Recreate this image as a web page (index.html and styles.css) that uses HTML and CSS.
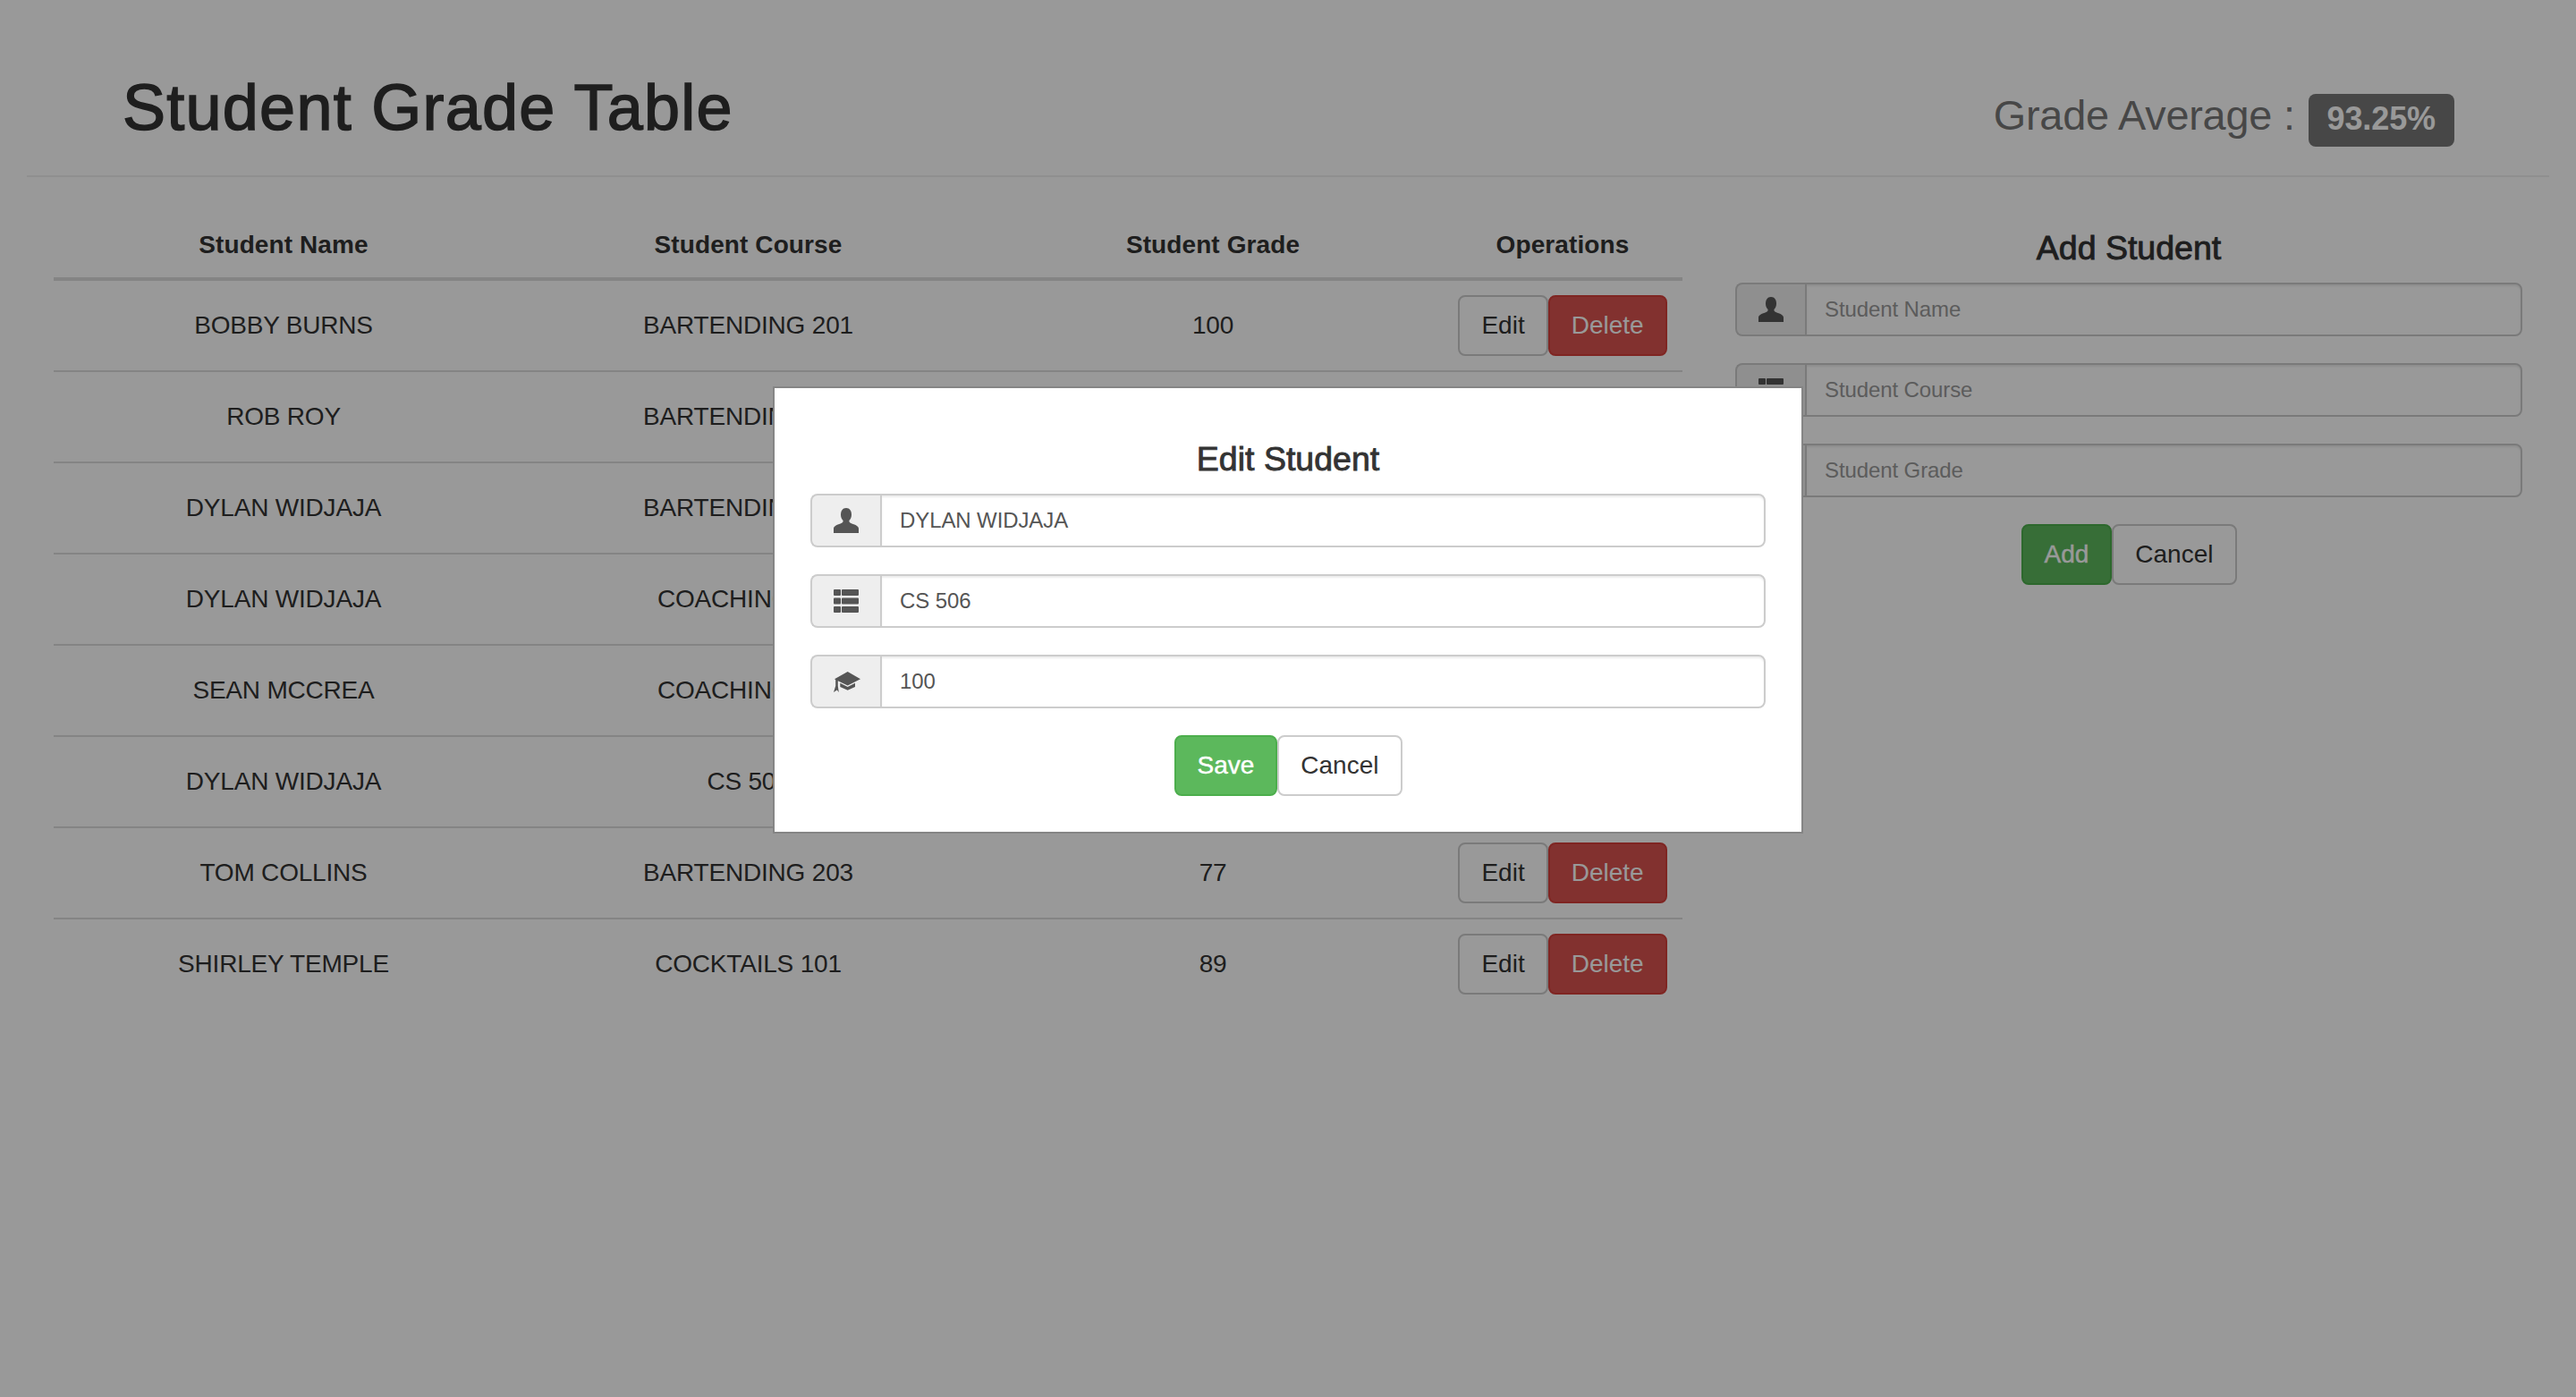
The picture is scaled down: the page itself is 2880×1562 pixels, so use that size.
FILE: index.html
```html
<!DOCTYPE html>
<html lang="en">
<head>
<meta charset="utf-8">
<title>Student Grade Table</title>
<link rel="stylesheet" href="styles.css">
</head>
<body>
<svg class="sprite" width="0" height="0" aria-hidden="true">
  <symbol id="i-user" viewBox="0 0 28 28"><path d="M14 0c4 0 6 3.2 6 7.5 0 2.8-1 5-2.6 6.5-.2 1.6.5 2.600 3 3.500 4 1.400 7.600 2.700 7.600 5.500v5H0v-5c0-2.800 3.600-4.100 7.600-5.500 2.500-.9 3.200-1.900 3-3.500C9 12.500 8 10.300 8 7.500 8 3.200 10 0 14 0z"/></symbol>
  <symbol id="i-list" viewBox="0 0 28 26"><path d="M1 0h6a1 1 0 0 1 1 1v5a1 1 0 0 1-1 1H1a1 1 0 0 1-1-1V1a1 1 0 0 1 1-1zM10 0h17a1 1 0 0 1 1 1v5a1 1 0 0 1-1 1H10a1 1 0 0 1-1-1V1a1 1 0 0 1 1-1zM1 9.500h6a1 1 0 0 1 1 1v5a1 1 0 0 1-1 1H1a1 1 0 0 1-1-1v-5a1 1 0 0 1 1-1zM10 9.500h17a1 1 0 0 1 1 1v5a1 1 0 0 1-1 1H10a1 1 0 0 1-1-1v-5a1 1 0 0 1 1-1zM1 19h6a1 1 0 0 1 1 1v5a1 1 0 0 1-1 1H1a1 1 0 0 1-1-1v-5a1 1 0 0 1 1-1zM10 19h17a1 1 0 0 1 1 1v5a1 1 0 0 1-1 1H10a1 1 0 0 1-1-1v-5a1 1 0 0 1 1-1z"/></symbol>
  <symbol id="i-grad" viewBox="0 0 30 23"><path d="M1 8.300 15.700 0 30 8.300 15.700 15.500 4.800 10.300V16l1 7-2-2.600L0 23l2.200-7V9z"/><path d="M7.300 12.800 15.700 17l8.300-4.200V17l-8.300 3.800L7.300 17z"/></symbol>
</svg>

<div class="page">
  <header class="page-header">
    <h1 class="page-title">Student Grade Table</h1>
    <div class="average">Grade Average : <span class="label">93.25%</span></div>
  </header>

  <main class="content">
    <table class="grades">
      <thead>
        <tr>
          <th class="col-name">Student Name</th>
          <th class="col-course">Student Course</th>
          <th class="col-grade">Student Grade</th>
          <th class="col-ops">Operations</th>
        </tr>
      </thead>
      <tbody>
        <tr><td>BOBBY BURNS</td><td>BARTENDING 201</td><td>100</td><td><div class="btn-row"><button class="btn">Edit</button><button class="btn btn-danger">Delete</button></div></td></tr>
        <tr><td>ROB ROY</td><td>BARTENDING 202</td><td>95</td><td><div class="btn-row"><button class="btn">Edit</button><button class="btn btn-danger">Delete</button></div></td></tr>
        <tr><td>DYLAN WIDJAJA</td><td>BARTENDING 203</td><td>95</td><td><div class="btn-row"><button class="btn">Edit</button><button class="btn btn-danger">Delete</button></div></td></tr>
        <tr><td>DYLAN WIDJAJA</td><td>COACHING 101</td><td>95</td><td><div class="btn-row"><button class="btn">Edit</button><button class="btn btn-danger">Delete</button></div></td></tr>
        <tr><td>SEAN MCCREA</td><td>COACHING 101</td><td>95</td><td><div class="btn-row"><button class="btn">Edit</button><button class="btn btn-danger">Delete</button></div></td></tr>
        <tr><td>DYLAN WIDJAJA</td><td>CS 506</td><td>100</td><td><div class="btn-row"><button class="btn">Edit</button><button class="btn btn-danger">Delete</button></div></td></tr>
        <tr><td>TOM COLLINS</td><td>BARTENDING 203</td><td>77</td><td><div class="btn-row"><button class="btn">Edit</button><button class="btn btn-danger">Delete</button></div></td></tr>
        <tr><td>SHIRLEY TEMPLE</td><td>COCKTAILS 101</td><td>89</td><td><div class="btn-row"><button class="btn">Edit</button><button class="btn btn-danger">Delete</button></div></td></tr>
      </tbody>
    </table>

    <aside class="add-panel">
      <h4 class="form-title">Add Student</h4>
      <div class="input-group"><span class="addon"><svg class="icon icon-user"><use href="#i-user"/></svg></span><input class="field" placeholder="Student Name"></div>
      <div class="input-group"><span class="addon"><svg class="icon icon-list"><use href="#i-list"/></svg></span><input class="field" placeholder="Student Course"></div>
      <div class="input-group"><span class="addon"><svg class="icon icon-grad"><use href="#i-grad"/></svg></span><input class="field" placeholder="Student Grade"></div>
      <div class="btn-row"><button class="btn btn-success">Add</button><button class="btn">Cancel</button></div>
    </aside>
  </main>
</div>

<div class="overlay">
  <section class="modal">
    <h4 class="form-title">Edit Student</h4>
    <div class="input-group"><span class="addon"><svg class="icon icon-user"><use href="#i-user"/></svg></span><input class="field" value="DYLAN WIDJAJA"></div>
    <div class="input-group"><span class="addon"><svg class="icon icon-list"><use href="#i-list"/></svg></span><input class="field" value="CS 506"></div>
    <div class="input-group"><span class="addon"><svg class="icon icon-grad"><use href="#i-grad"/></svg></span><input class="field" value="100"></div>
    <div class="btn-row"><button class="btn btn-success">Save</button><button class="btn">Cancel</button></div>
  </section>
</div>
</body>
</html>
```

FILE: styles.css
```css
* { box-sizing: border-box; }

html, body { height: 100%; }

body {
  margin: 0;
  background: #fff;
  color: #333;
  font-family: "Liberation Sans", Arial, sans-serif;
  font-size: 28px;
  line-height: 40px;
  overflow: hidden;
}

.sprite { position: absolute; }

.page-header {
  display: flex;
  justify-content: space-between;
  align-items: baseline;
  margin: 0 30px;
  padding: 81px 106px 36px 107px;
  border-bottom: 2px solid #eee;
}

.page-title {
  margin: 0;
  font-size: 72px;
  line-height: 79px;
  font-weight: 400;
  letter-spacing: 1.25px;
  -webkit-text-stroke: 1.5px #333;
}

.average {
  font-size: 46.8px;
  line-height: 52px;
  letter-spacing: -.2px;
  color: #777;
}

.label {
  margin-left: 2px;
  padding: 7px 21px 10.5px;
  border-radius: 8px;
  background: #777;
  color: #fff;
  font-size: 36px;
  font-weight: 700;
  letter-spacing: -.1px;
}

.content {
  display: flex;
  align-items: flex-start;
  gap: 59px;
  padding: 40px 60px 0 60px;
}

.grades {
  width: 1821px;
  flex: none;
  table-layout: fixed;
  border-collapse: separate;
  border-spacing: 0;
}

.grades th {
  padding: 16px;
  border-bottom: 4px solid #ddd;
  font-weight: 700;
  text-align: center;
  letter-spacing: .1px;
}

.grades td {
  padding: 16px;
  text-align: center;
  vertical-align: middle;
  letter-spacing: -.2px;
}

.grades tbody tr + tr td { border-top: 2px solid #ddd; }

.col-name { width: 514px; }
.col-course { width: 525px; }
.col-grade { width: 514px; }
.col-ops { width: 268px; }

.add-panel { flex: 1; }

.form-title {
  margin: 20px 0;
  font-size: 37.5px;
  line-height: 38px;
  font-weight: 400;
  text-align: center;
  -webkit-text-stroke: 0.9px #333;
}

.input-group {
  display: flex;
  height: 60px;
  margin-bottom: 30px;
}

.addon {
  display: flex;
  align-items: center;
  justify-content: center;
  flex: none;
  width: 78px;
  border: 2px solid #ccc;
  border-right: 0;
  border-radius: 8px 0 0 8px;
  background: #eee;
}

.icon { display: block; fill: #555; }
.icon-user { width: 28px; height: 28px; }
.icon-list { width: 28px; height: 26px; }
.icon-grad { width: 30px; height: 23px; margin-left: 2px; }

.field {
  flex: 1;
  min-width: 0;
  padding: 0 20px;
  border: 2px solid #ccc;
  border-radius: 0 8px 8px 0;
  box-shadow: inset 0 2px 2px rgba(0, 0, 0, .075);
  color: #555;
  font: 24px "Liberation Sans", Arial, sans-serif;
  letter-spacing: -.1px;
  outline: 0;
}

.field::placeholder { color: #999; opacity: 1; }

.btn-row {
  display: flex;
  justify-content: center;
}

.btn {
  height: 68px;
  padding: 0 24px;
  border: 2px solid #ccc;
  border-radius: 8px;
  background: #fff;
  color: #333;
  font: 28px/40px "Liberation Sans", Arial, sans-serif;
}

.btn-success { background: #5cb85c; border-color: #4cae4c; color: #fff; -webkit-text-stroke: .4px #fff; }
.btn-danger { background: #d9534f; border-color: #d43f3a; color: #fff; }

.overlay {
  position: fixed;
  inset: 0;
  display: flex;
  justify-content: center;
  align-items: flex-start;
  padding-top: 432px;
  background: rgba(0, 0, 0, .4);
}

.modal {
  width: 1152px;
  padding: 20px 40px 40px;
  border: 2px solid #858585;
  background: #fff;
}
.modal .form-title { margin-top: 40px; }
```
